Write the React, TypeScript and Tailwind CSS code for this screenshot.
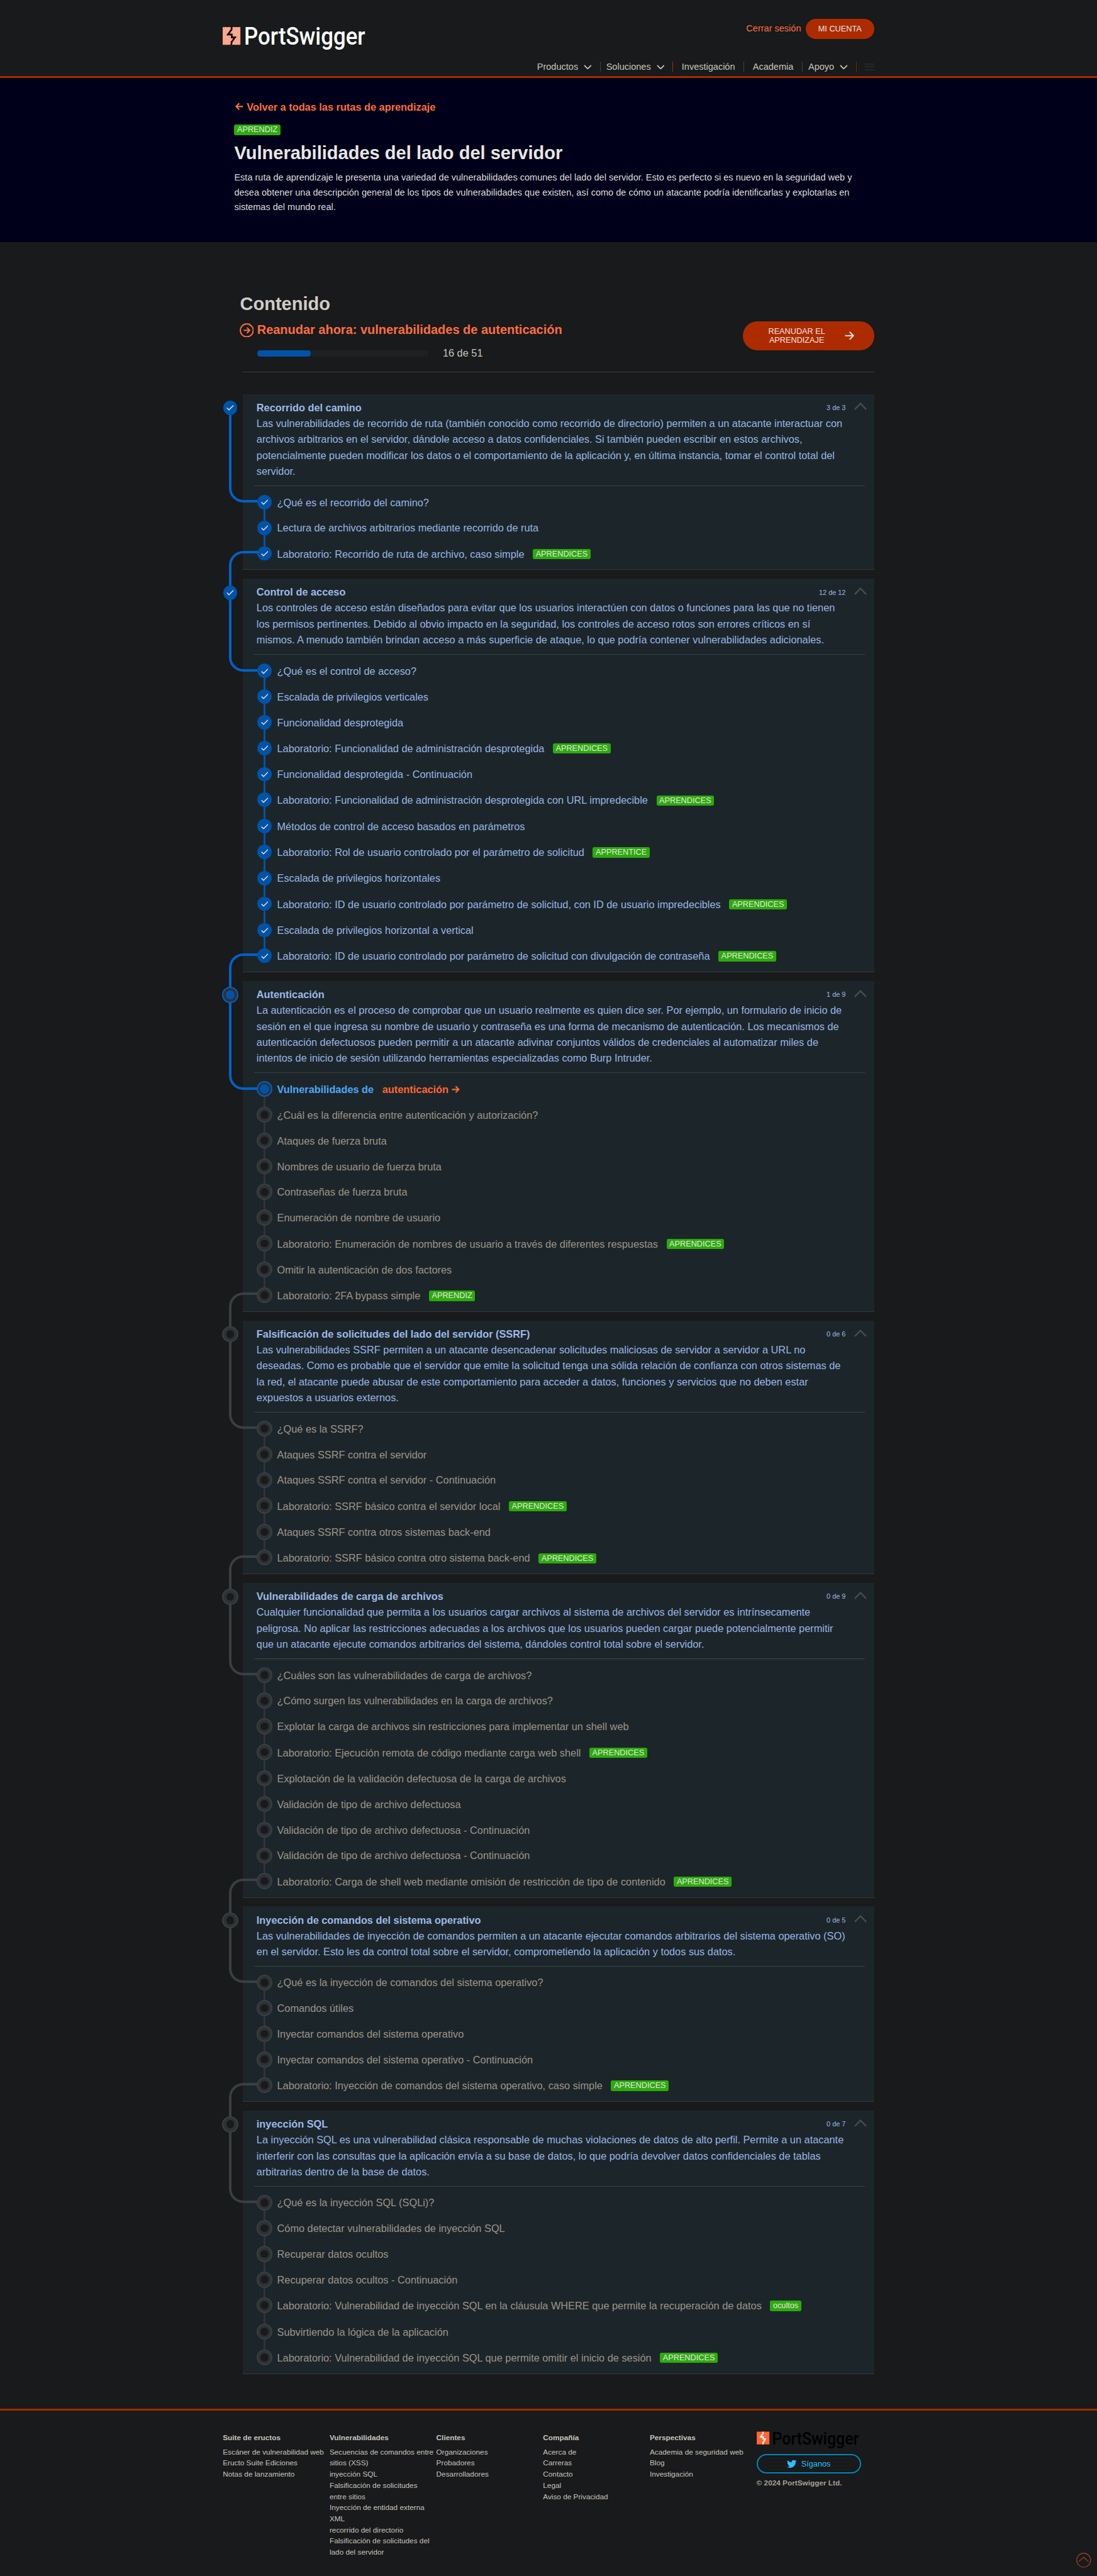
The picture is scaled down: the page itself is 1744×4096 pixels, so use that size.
import React from "react";
import { FaTwitter } from "react-icons/fa";

type Status = "done" | "current" | "todo";
type Item = { text: string; label?: string; status?: Status; link?: string };
type Module = { title: string; count: string; status: Status; lines: string[]; items: Item[] };

const AP = "APRENDICES";

const modules: Module[] = [
  {
    title: "Recorrido del camino",
    count: "3 de 3",
    status: "done",
    lines: [
      "Las vulnerabilidades de recorrido de ruta (también conocido como recorrido de directorio) permiten a un atacante interactuar con",
      "archivos arbitrarios en el servidor, dándole acceso a datos confidenciales. Si también pueden escribir en estos archivos,",
      "potencialmente pueden modificar los datos o el comportamiento de la aplicación y, en última instancia, tomar el control total del",
      "servidor.",
    ],
    items: [
      { text: "¿Qué es el recorrido del camino?" },
      { text: "Lectura de archivos arbitrarios mediante recorrido de ruta" },
      { text: "Laboratorio: Recorrido de ruta de archivo, caso simple", label: AP },
    ],
  },
  {
    title: "Control de acceso",
    count: "12 de 12",
    status: "done",
    lines: [
      "Los controles de acceso están diseñados para evitar que los usuarios interactúen con datos o funciones para las que no tienen",
      "los permisos pertinentes. Debido al obvio impacto en la seguridad, los controles de acceso rotos son errores críticos en sí",
      "mismos. A menudo también brindan acceso a más superficie de ataque, lo que podría contener vulnerabilidades adicionales.",
    ],
    items: [
      { text: "¿Qué es el control de acceso?" },
      { text: "Escalada de privilegios verticales" },
      { text: "Funcionalidad desprotegida" },
      { text: "Laboratorio: Funcionalidad de administración desprotegida", label: AP },
      { text: "Funcionalidad desprotegida - Continuación" },
      { text: "Laboratorio: Funcionalidad de administración desprotegida con URL impredecible", label: AP },
      { text: "Métodos de control de acceso basados en parámetros" },
      { text: "Laboratorio: Rol de usuario controlado por el parámetro de solicitud", label: "APPRENTICE" },
      { text: "Escalada de privilegios horizontales" },
      { text: "Laboratorio: ID de usuario controlado por parámetro de solicitud, con ID de usuario impredecibles", label: AP },
      { text: "Escalada de privilegios horizontal a vertical" },
      { text: "Laboratorio: ID de usuario controlado por parámetro de solicitud con divulgación de contraseña", label: AP },
    ],
  },
  {
    title: "Autenticación",
    count: "1 de 9",
    status: "current",
    lines: [
      "La autenticación es el proceso de comprobar que un usuario realmente es quien dice ser. Por ejemplo, un formulario de inicio de",
      "sesión en el que ingresa su nombre de usuario y contraseña es una forma de mecanismo de autenticación. Los mecanismos de",
      "autenticación defectuosos pueden permitir a un atacante adivinar conjuntos válidos de credenciales al automatizar miles de",
      "intentos de inicio de sesión utilizando herramientas especializadas como Burp Intruder.",
    ],
    items: [
      { text: "Vulnerabilidades de", link: "autenticación", status: "current" },
      { text: "¿Cuál es la diferencia entre autenticación y autorización?" },
      { text: "Ataques de fuerza bruta" },
      { text: "Nombres de usuario de fuerza bruta" },
      { text: "Contraseñas de fuerza bruta" },
      { text: "Enumeración de nombre de usuario" },
      { text: "Laboratorio: Enumeración de nombres de usuario a través de diferentes respuestas", label: AP },
      { text: "Omitir la autenticación de dos factores" },
      { text: "Laboratorio: 2FA bypass simple", label: "APRENDIZ" },
    ],
  },
  {
    title: "Falsificación de solicitudes del lado del servidor (SSRF)",
    count: "0 de 6",
    status: "todo",
    lines: [
      "Las vulnerabilidades SSRF permiten a un atacante desencadenar solicitudes maliciosas de servidor a servidor a URL no",
      "deseadas. Como es probable que el servidor que emite la solicitud tenga una sólida relación de confianza con otros sistemas de",
      "la red, el atacante puede abusar de este comportamiento para acceder a datos, funciones y servicios que no deben estar",
      "expuestos a usuarios externos.",
    ],
    items: [
      { text: "¿Qué es la SSRF?" },
      { text: "Ataques SSRF contra el servidor" },
      { text: "Ataques SSRF contra el servidor - Continuación" },
      { text: "Laboratorio: SSRF básico contra el servidor local", label: AP },
      { text: "Ataques SSRF contra otros sistemas back-end" },
      { text: "Laboratorio: SSRF básico contra otro sistema back-end", label: AP },
    ],
  },
  {
    title: "Vulnerabilidades de carga de archivos",
    count: "0 de 9",
    status: "todo",
    lines: [
      "Cualquier funcionalidad que permita a los usuarios cargar archivos al sistema de archivos del servidor es intrínsecamente",
      "peligrosa. No aplicar las restricciones adecuadas a los archivos que los usuarios pueden cargar puede potencialmente permitir",
      "que un atacante ejecute comandos arbitrarios del sistema, dándoles control total sobre el servidor.",
    ],
    items: [
      { text: "¿Cuáles son las vulnerabilidades de carga de archivos?" },
      { text: "¿Cómo surgen las vulnerabilidades en la carga de archivos?" },
      { text: "Explotar la carga de archivos sin restricciones para implementar un shell web" },
      { text: "Laboratorio: Ejecución remota de código mediante carga web shell", label: AP },
      { text: "Explotación de la validación defectuosa de la carga de archivos" },
      { text: "Validación de tipo de archivo defectuosa" },
      { text: "Validación de tipo de archivo defectuosa - Continuación" },
      { text: "Validación de tipo de archivo defectuosa - Continuación" },
      { text: "Laboratorio: Carga de shell web mediante omisión de restricción de tipo de contenido", label: AP },
    ],
  },
  {
    title: "Inyección de comandos del sistema operativo",
    count: "0 de 5",
    status: "todo",
    lines: [
      "Las vulnerabilidades de inyección de comandos permiten a un atacante ejecutar comandos arbitrarios del sistema operativo (SO)",
      "en el servidor. Esto les da control total sobre el servidor, comprometiendo la aplicación y todos sus datos.",
    ],
    items: [
      { text: "¿Qué es la inyección de comandos del sistema operativo?" },
      { text: "Comandos útiles" },
      { text: "Inyectar comandos del sistema operativo" },
      { text: "Inyectar comandos del sistema operativo - Continuación" },
      { text: "Laboratorio: Inyección de comandos del sistema operativo, caso simple", label: AP },
    ],
  },
  {
    title: "inyección SQL",
    count: "0 de 7",
    status: "todo",
    lines: [
      "La inyección SQL es una vulnerabilidad clásica responsable de muchas violaciones de datos de alto perfil. Permite a un atacante",
      "interferir con las consultas que la aplicación envía a su base de datos, lo que podría devolver datos confidenciales de tablas",
      "arbitrarias dentro de la base de datos.",
    ],
    items: [
      { text: "¿Qué es la inyección SQL (SQLi)?" },
      { text: "Cómo detectar vulnerabilidades de inyección SQL" },
      { text: "Recuperar datos ocultos" },
      { text: "Recuperar datos ocultos - Continuación" },
      { text: "Laboratorio: Vulnerabilidad de inyección SQL en la cláusula WHERE que permite la recuperación de datos", label: "ocultos" },
      { text: "Subvirtiendo la lógica de la aplicación" },
      { text: "Laboratorio: Vulnerabilidad de inyección SQL que permite omitir el inicio de sesión", label: AP },
    ],
  },
];

const footerColumns: { title: string; lines: string[] }[] = [
  { title: "Suite de eructos", lines: ["Escáner de vulnerabilidad web", "Eructo Suite Ediciones", "Notas de lanzamiento"] },
  {
    title: "Vulnerabilidades",
    lines: [
      "Secuencias de comandos entre",
      "sitios (XSS)",
      "inyección SQL",
      "Falsificación de solicitudes",
      "entre sitios",
      "Inyección de entidad externa",
      "XML",
      "recorrido del directorio",
      "Falsificación de solicitudes del",
      "lado del servidor",
    ],
  },
  { title: "Clientes", lines: ["Organizaciones", "Probadores", "Desarrolladores"] },
  { title: "Compañía", lines: ["Acerca de", "Carreras", "Contacto", "Legal", "Aviso de Privacidad"] },
  { title: "Perspectivas", lines: ["Academia de seguridad web", "Blog", "Investigación"] },
];

function Logo({ square, bolt, word, className }: { square: string; bolt: string; word: string; className: string }) {
  return (
    <svg viewBox="0 -10 260 60" className={className} role="img" aria-label="PortSwigger">
      <rect width="31" height="31" fill={square} />
      <path d="M15.6 0V4.2L9.2 13H15.9V18H21.6L15.3 26.6V31" fill="none" stroke={bolt} strokeWidth="2.9" />
      <text
        x="37.5"
        y="31"
        fill={word}
        fontFamily="Roboto, sans-serif"
        fontSize="43.5"
        fontWeight="500"
        textLength="212"
        lengthAdjust="spacingAndGlyphs"
      >
        PortSwigger
      </text>
    </svg>
  );
}

function Arrow({ className, back }: { className: string; back?: boolean }) {
  return (
    <svg viewBox="0 0 14 14" fill="none" stroke="currentColor" className={className}>
      <path d={back ? "M13.5 7H2M7 1.5L1.5 7L7 12.5" : "M.5 7H12M7 1.5L12.5 7L7 12.5"} />
    </svg>
  );
}

function ChevronDown() {
  return (
    <svg viewBox="0 0 14 8" fill="none" stroke="currentColor" strokeWidth="2" className="ml-[10px] h-2 w-[14px]">
      <path d="M1 1L7 7L13 1" />
    </svg>
  );
}

function Separator({ className }: { className: string }) {
  return <span className={`h-[18px] w-[1.1px] ${className}`} />;
}

function Badge({ children }: { children: React.ReactNode }) {
  return (
    <span className="h-[18px] rounded-[3px] bg-[#2daa0e] px-[5px] text-[14px] leading-[18px] text-[#e8e6e3]">
      {children}
    </span>
  );
}

function StatusDot({ status }: { status: Status }) {
  if (status === "done") {
    return (
      <span className="relative flex size-[28px] items-center justify-center">
        <span className="flex size-[25px] items-center justify-center rounded-full bg-[#0053a8]">
          <svg viewBox="0 0 13 10" fill="none" stroke="#e8e6e3" strokeWidth="1.6" className="mt-px h-[10px] w-[13px]">
            <path d="M.8 5L4.4 8.6L12.2 .8" />
          </svg>
        </span>
      </span>
    );
  }
  if (status === "current") {
    return (
      <span className="relative flex size-[28px] items-center justify-center rounded-full border-[2.3px] border-[#0061c4] bg-[#2e3234]">
        <span className="size-[16px] rounded-full bg-[#0053a8]" />
      </span>
    );
  }
  return (
    <span className="relative flex size-[28px] items-center justify-center rounded-full border-[2.3px] border-[#3a3f42] bg-[#2e3234]">
      <span className="size-[14px] rounded-full bg-[#181a1b]" />
    </span>
  );
}

function ItemRow({ item, status, last }: { item: Item; status: Status; last: boolean }) {
  const color =
    status === "done" ? "text-[#98b5e5]" : status === "current" ? "font-bold text-[#4ea8f7]" : "text-[#9d9488]";
  return (
    <li className={`flex gap-2 ${item.label ? "h-[46px]" : "h-[45px]"}`}>
      <div className="relative pt-2">
        {!last && (
          <span
            className={`absolute top-[22px] left-3 h-[45px] w-1 ${status === "done" ? "bg-[#0053a8]" : "bg-[#2f3436]"}`}
          />
        )}
        <StatusDot status={status} />
      </div>
      <div className={`flex h-full items-center gap-[15px] whitespace-nowrap ${color}`}>
        <span>{item.text}</span>
        {item.link && (
          <span className="flex items-center gap-[6px] text-[#ff6633]">
            {item.link}
            <Arrow className="size-[14px] stroke-[2.4]" />
          </span>
        )}
        {item.label && <Badge>{item.label}</Badge>}
      </div>
    </li>
  );
}

function ModuleCard({ module, index }: { module: Module; index: number }) {
  const active = module.status !== "todo";
  const lineColor = active ? "border-[#0062c8]" : "border-[#3a3f42]";
  // The rail runs from the module dot down to the first item's dot.
  const railHeight = 167 + 22 - 24 + (module.lines.length - 4) * 28 + 1;
  return (
    <section className="relative mb-[15.33px] border-b border-[#34393b] bg-[#1c262a] pt-[9.5px] pb-1 pl-6">
      {index > 0 && (
        <span className={`absolute top-[-49px] -left-6 h-[73px] w-[50px] rounded-tl-[25px] border-t-[4.5px] border-l-[4.5px] ${lineColor}`} />
      )}
      <span
        className={`absolute top-6 -left-6 w-[50px] rounded-bl-[25px] border-b-[4.5px] border-l-[4.5px] ${lineColor}`}
        style={{ height: railHeight }}
      />
      <span className="absolute top-[10px] -left-9">
        <StatusDot status={module.status} />
      </span>
      <header className="flex h-7 items-center pr-[13px] text-[#9db9e8]">
        <h3 className="flex-1 text-[18px] font-bold">{module.title}</h3>
        <span className="text-[12px]">{module.count}</span>
        <svg viewBox="0 0 22 13" fill="none" stroke="#474d4f" strokeWidth="2.6" className="mb-1 ml-[15px] h-[13px] w-[22px]">
          <path d="M1 12L11 1.8L21 12" />
        </svg>
      </header>
      <div className="leading-7 whitespace-nowrap text-[#98b5e5]">
        {module.lines.map((line) => (
          <p key={line}>{line}</p>
        ))}
      </div>
      <div className="mt-[10.5px] mr-4 -ml-1 h-px bg-[#3a4444]" />
      <ul className="pt-[6px]">
        {module.items.map((item, i) => (
          <ItemRow
            key={i}
            item={item}
            status={item.status ?? (module.status === "done" ? "done" : "todo")}
            last={i === module.items.length - 1}
          />
        ))}
      </ul>
    </section>
  );
}

export default function App() {
  return (
    <div className="h-[4509px] w-[1920px] bg-[#181a1b] font-['Liberation_Sans',Arial,sans-serif] text-[18px] text-[#c8c3bc] [zoom:0.908333]">
      <header className="h-[137px] border-b-[3.4px] border-[#a62b00]">
        <div className="mx-auto flex w-[1140px] justify-between">
          <Logo square="#ffa68c" bolt="#000000" word="#ffffff" className="mt-[37px] h-[60px] w-[260px]" />
          <div className="pt-[33px] text-[16px]">
            <div className="flex h-[35px] items-center justify-end gap-2">
              <a className="text-[#ff6e40]">Cerrar sesión</a>
              <button className="h-[35px] w-[120px] rounded-[18px] bg-[#ad2b00] text-[14px] text-[#e8e6e3]">MI CUENTA</button>
            </div>
            <nav className="mt-[39px] flex h-5 items-center leading-5">
              Productos
              <ChevronDown />
              <Separator className="mr-[10px] ml-[14px] bg-[#3f4447]" />
              Soluciones
              <ChevronDown />
              <Separator className="mr-[15px] ml-[14px] bg-[#a62b00]" />
              Investigación
              <Separator className="mx-[15px] bg-[#3f4447]" />
              Academia
              <Separator className="mr-[10px] ml-[15px] bg-[#3f4447]" />
              Apoyo
              <ChevronDown />
              <Separator className="mr-[15px] ml-[14px] bg-[#7a2000]" />
              <span className="flex w-4 flex-col gap-[3px]">
                <span className="h-[2px] bg-[#25292b]" />
                <span className="h-[2px] bg-[#25292b]" />
                <span className="h-[2px] bg-[#25292b]" />
              </span>
            </nav>
          </div>
        </div>
      </header>

      <section className="h-[287px] bg-[#00001a] pt-[36px] text-[#e8e6e3]">
        <div className="mx-auto w-[1140px] px-5">
          <a className="flex h-7 items-center gap-[6px] pl-[2px] font-bold text-[#ff6e40]">
            <Arrow back className="size-[14px] stroke-[2.4]" />
            Volver a todas las rutas de aprendizaje
          </a>
          <div className="mt-[17.5px] flex">
            <Badge>APRENDIZ</Badge>
          </div>
          <h1 className="mt-[11px] text-[32px] leading-10 font-bold">Vulnerabilidades del lado del servidor</h1>
          <div className="mt-[11px] text-[16px] leading-[26px] whitespace-nowrap text-[#dedbd7]">
            <p>
              Esta ruta de aprendizaje le presenta una variedad de vulnerabilidades comunes del lado del servidor. Esto es
              perfecto si es nuevo en la seguridad web y
            </p>
            <p>
              desea obtener una descripción general de los tipos de vulnerabilidades que existen, así como de cómo un
              atacante podría identificarlas y explotarlas en
            </p>
            <p>sistemas del mundo real.</p>
          </div>
        </div>
      </section>

      <main className="mx-auto h-[3792px] w-[1140px] pt-[87.5px]">
        <h2 className="pl-[30px] text-[32px] leading-10 font-bold text-[#d0ccc6]">Contenido</h2>
        <div className="mt-[11.5px] flex justify-between">
          <div className="pl-[29px]">
            <a className="mt-px flex h-7 items-center gap-[6px] text-[22px] font-bold text-[#ff6e40]">
              <svg viewBox="0 0 25 25" fill="none" stroke="currentColor" strokeWidth="2.2" className="size-[25px]">
                <circle cx="12.5" cy="12.5" r="11.3" />
                <path d="M7 12.5H17M12.7 7.6L17.6 12.5L12.7 17.4" />
              </svg>
              Reanudar ahora: vulnerabilidades de autenticación
            </a>
            <div className="mt-3 flex h-7 items-center pl-[31px]">
              <div className="mt-[2px] h-[11px] w-[300px] rounded-[5px] bg-[#1e2122]">
                <div className="h-full w-[94px] rounded-[5px] bg-[#0053a8]" />
              </div>
              <span className="ml-[25px]">16 de 51</span>
            </div>
          </div>
          <button className="flex h-[50px] w-[230px] items-center rounded-[25px] bg-[#ad2b00] pl-11 text-[14px] leading-4 text-[#e8e6e3]">
            <span className="w-[101px]">
              REANUDAR EL
              <br />
              APRENDIZAJE
            </span>
            <Arrow className="ml-[34px] size-[17px] stroke-[1.8]" />
          </button>
        </div>
        <div className="mt-[19px] ml-[34px] h-px bg-[#3b3f42]" />
        <div className="mt-[38px] ml-[35px]">
          {modules.map((module, i) => (
            <ModuleCard key={module.title} module={module} index={i} />
          ))}
        </div>
      </main>

      <footer className="relative h-[293px] border-t-[3.4px] border-[#a62b00] text-[13px]">
        <div className="mx-auto flex w-[1140px] pt-[37px] whitespace-nowrap">
          {footerColumns.map((column) => (
            <div key={column.title} className="w-[186.8px] pt-[0.7px]">
              <h4 className="mb-[6.3px] leading-5 font-bold">{column.title}</h4>
              {column.lines.map((line) => (
                <p key={line} className="leading-[19.5px]">
                  {line}
                </p>
              ))}
            </div>
          ))}
          <div>
            <Logo square="#ff6633" bolt="#ffffff" word="#000000" className="-mt-[7px] h-[43px] w-[186.3px]" />
            <a className="mt-[3px] flex h-[35px] w-[183px] items-center justify-center gap-2 rounded-[18px] border-[2.3px] border-[#0085b8] text-[14px] text-[#29c0ff]">
              <FaTwitter className="size-[17px]" />
              Síganos
            </a>
            <p className="mt-[6px] leading-5 font-bold text-[#a8a095]">© 2024 PortSwigger Ltd.</p>
          </div>
        </div>
        <svg viewBox="0 0 26 26" fill="none" stroke="#8f4127" strokeWidth="1.5" className="absolute right-[10px] bottom-[14px] size-[26px]">
          <circle cx="13" cy="13" r="12.2" />
          <path d="M4.5 15.5L13 8L21.5 15.5" />
        </svg>
      </footer>
    </div>
  );
}
